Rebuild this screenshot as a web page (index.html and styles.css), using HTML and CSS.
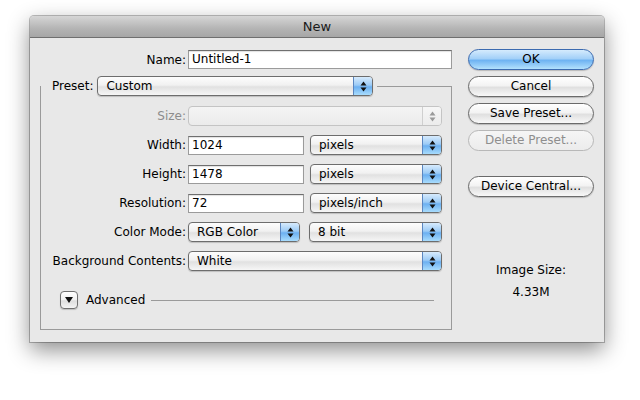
FILE: index.html
```html
<!DOCTYPE html>
<html>
<head>
<meta charset="utf-8">
<title>New</title>
<link rel="stylesheet" href="styles.css">
</head>
<body>
<div class="window">
  <div class="titlebar">New</div>
  <div class="content">
    <div class="main">
      <div class="row name-row">
        <span class="label">Name:</span>
        <div class="field name-field">Untitled-1</div>
      </div>
      <fieldset class="group">
        <legend class="legend">
          <span class="legend-label">Preset:</span>
          <div class="popup preset-popup"><span class="popup-text">Custom</span><span class="arrows"><svg width="7" height="11" viewBox="0 0 7 11"><path d="M3.5 0.5 L6.5 4.5 L0.5 4.5 Z M0.5 6.5 L6.5 6.5 L3.5 10.5 Z" fill="#111"/></svg></span></div>
        </legend>
        <div class="row">
          <span class="label disabled">Size:</span>
          <div class="popup popup-disabled wide"><span class="popup-text"></span><span class="arrows"><svg width="7" height="11" viewBox="0 0 7 11"><path d="M3.5 0.5 L6.5 4.5 L0.5 4.5 Z M0.5 6.5 L6.5 6.5 L3.5 10.5 Z" fill="#9a9a9a"/></svg></span></div>
        </div>
        <div class="row">
          <span class="label">Width:</span>
          <div class="field num-field">1024</div>
          <div class="popup unit-popup"><span class="popup-text">pixels</span><span class="arrows"><svg width="7" height="11" viewBox="0 0 7 11"><path d="M3.5 0.5 L6.5 4.5 L0.5 4.5 Z M0.5 6.5 L6.5 6.5 L3.5 10.5 Z" fill="#111"/></svg></span></div>
        </div>
        <div class="row">
          <span class="label">Height:</span>
          <div class="field num-field">1478</div>
          <div class="popup unit-popup"><span class="popup-text">pixels</span><span class="arrows"><svg width="7" height="11" viewBox="0 0 7 11"><path d="M3.5 0.5 L6.5 4.5 L0.5 4.5 Z M0.5 6.5 L6.5 6.5 L3.5 10.5 Z" fill="#111"/></svg></span></div>
        </div>
        <div class="row">
          <span class="label">Resolution:</span>
          <div class="field num-field">72</div>
          <div class="popup unit-popup"><span class="popup-text">pixels/inch</span><span class="arrows"><svg width="7" height="11" viewBox="0 0 7 11"><path d="M3.5 0.5 L6.5 4.5 L0.5 4.5 Z M0.5 6.5 L6.5 6.5 L3.5 10.5 Z" fill="#111"/></svg></span></div>
        </div>
        <div class="row">
          <span class="label">Color Mode:</span>
          <div class="popup mode-popup"><span class="popup-text">RGB Color</span><span class="arrows"><svg width="7" height="11" viewBox="0 0 7 11"><path d="M3.5 0.5 L6.5 4.5 L0.5 4.5 Z M0.5 6.5 L6.5 6.5 L3.5 10.5 Z" fill="#111"/></svg></span></div>
          <div class="popup bit-popup"><span class="popup-text">8 bit</span><span class="arrows"><svg width="7" height="11" viewBox="0 0 7 11"><path d="M3.5 0.5 L6.5 4.5 L0.5 4.5 Z M0.5 6.5 L6.5 6.5 L3.5 10.5 Z" fill="#111"/></svg></span></div>
        </div>
        <div class="row">
          <span class="label">Background Contents:</span>
          <div class="popup wide"><span class="popup-text">White</span><span class="arrows"><svg width="7" height="11" viewBox="0 0 7 11"><path d="M3.5 0.5 L6.5 4.5 L0.5 4.5 Z M0.5 6.5 L6.5 6.5 L3.5 10.5 Z" fill="#111"/></svg></span></div>
        </div>
        <div class="advanced">
          <span class="disclosure"><svg width="8" height="6" viewBox="0 0 8 6"><path d="M0 0 L8 0 L4 6 Z" fill="#111"/></svg></span>
          <span class="adv-label">Advanced</span>
          <span class="adv-line"></span>
        </div>
      </fieldset>
    </div>
    <div class="side">
      <div class="btn btn-default">OK</div>
      <div class="btn">Cancel</div>
      <div class="btn">Save Preset...</div>
      <div class="btn btn-disabled">Delete Preset...</div>
      <div class="btn btn-device">Device Central...</div>
      <div class="info">
        <div class="info-label">Image Size:</div>
        <div class="info-value">4.33M</div>
      </div>
    </div>
  </div>
</div>
</body>
</html>
```
FILE: styles.css
```css
* { box-sizing: border-box; }
html, body { margin: 0; padding: 0; background: #ffffff; }
body {
  width: 640px;
  height: 400px;
  padding: 16px 0 0 30px;
  font-family: "DejaVu Sans", "Lucida Grande", sans-serif;
  font-size: 12px;
  color: #000;
  overflow: hidden;
}
.window {
  width: 574px;
  height: 326px;
  background: #e8e8e8;
  border-radius: 4px 4px 0 0;
  box-shadow: 0 8px 22px rgba(0,0,0,0.45), 0 0 0 1px rgba(0,0,0,0.25);
  display: flex;
  flex-direction: column;
}
.titlebar {
  height: 22px;
  line-height: 21px;
  text-align: center;
  font-size: 13px;
  color: #1a1a1a;
  background: linear-gradient(#d6d6d6, #b4b4b4 60%, #a6a6a6);
  border-bottom: 1px solid #6f6f6f;
  border-radius: 4px 4px 0 0;
}
.content {
  flex: 1;
  display: flex;
  padding: 0 10px 0 10px;
}
.main {
  width: 412px;
  padding-top: 12px;
  display: flex;
  flex-direction: column;
}
.side {
  width: 126px;
  margin-left: 16px;
  padding-top: 11px;
  display: flex;
  flex-direction: column;
  gap: 6px;
}
.row {
  display: flex;
  align-items: center;
  height: 20px;
  margin-bottom: 9px;
}
.label {
  width: 145px;
  text-align: right;
  margin-right: 2px;
  white-space: nowrap;
  flex-shrink: 0;
}
.name-row { margin-bottom: 0; height: 19px; }
.name-row .label { width: 146px; }
.label.disabled { color: #8c8c8c; }
.field {
  height: 19px;
  line-height: 17px;
  padding-left: 3px;
  background: #fff;
  border: 1px solid #9b9b9b;
  border-top-color: #6f6f6f;
  box-shadow: inset 0 1px 1px rgba(0,0,0,0.12);
}
.name-field { width: 264px; }
.num-field { width: 116px; margin-right: 6px; }
.group {
  margin: 7px 0 0 0;
  padding: 10px 9px 20px 0;
  border: 1px solid #9a9a9a;
  min-width: 0;
  height: 254px;
}
.legend {
  display: flex;
  align-items: center;
  padding: 0 4px 0 11px;
  margin-left: 0;
  height: 20px;
}
.legend-label { margin-right: 4px; }
.popup {
  height: 20px;
  display: flex;
  align-items: stretch;
  border: 1px solid #6d6d6d;
  border-radius: 4px;
  background: linear-gradient(#fdfdfd, #f1f1f1 45%, #e1e1e1 55%, #f6f6f6);
  box-shadow: 0 1px 1px rgba(0,0,0,0.18);
  overflow: hidden;
}
.popup-text {
  flex: 1;
  padding-left: 8px;
  line-height: 18px;
  white-space: nowrap;
}
.arrows {
  width: 19px;
  border-left: 1px solid #5b86c0;
  background: linear-gradient(#d7ebfd, #9ccbf6 45%, #6cb0f1 55%, #a8dcfd);
  display: flex;
  align-items: center;
  justify-content: center;
}
.preset-popup { width: 276px; }
.wide { width: 254px; }
.unit-popup { width: 132px; }
.mode-popup { width: 112px; margin-right: 9px; }
.bit-popup { width: 133px; }
.popup-disabled {
  border-color: #c4c4c4;
  background: linear-gradient(#f4f4f4, #ebebeb);
  box-shadow: none;
}
.popup-disabled .arrows {
  border-left: 1px solid #cfcfcf;
  background: linear-gradient(#f6f6f6, #ececec);
}
.advanced {
  display: flex;
  align-items: center;
  height: 18px;
  margin-top: 20px;
  padding-left: 19px;
}
.disclosure {
  width: 18px;
  height: 18px;
  border: 1px solid #707070;
  border-radius: 4px;
  background: linear-gradient(#ffffff, #f0f0f0 50%, #dedede 55%, #f4f4f4);
  box-shadow: 0 1px 1px rgba(0,0,0,0.18);
  display: flex;
  align-items: center;
  justify-content: center;
}
.adv-label { margin-left: 8px; }
.adv-line {
  flex: 1;
  height: 1px;
  background: #9a9a9a;
  margin-left: 6px;
  margin-right: 8px;
}
.btn {
  height: 21px;
  line-height: 19px;
  text-align: center;
  border: 1px solid #6a6a6a;
  border-radius: 11px;
  background: linear-gradient(#ffffff, #f3f3f3 45%, #e0e0e0 55%, #f8f8f8);
  box-shadow: 0 1px 1px rgba(0,0,0,0.2);
  white-space: nowrap;
}
.btn-default {
  border-color: #3c6bb0;
  background: linear-gradient(#d5ebfd, #a3d0f8 45%, #6fb3f2 55%, #b3e1fd);
}
.btn-disabled {
  color: #8e8e8e;
  border-color: #b8b8b8;
  background: linear-gradient(#f5f5f5, #ececec);
  box-shadow: none;
}
.btn-device { margin-top: 19px; }
.info {
  margin-top: 59px;
  text-align: center;
  line-height: 16px;
}
.info-value { margin-top: 6px; }
```
